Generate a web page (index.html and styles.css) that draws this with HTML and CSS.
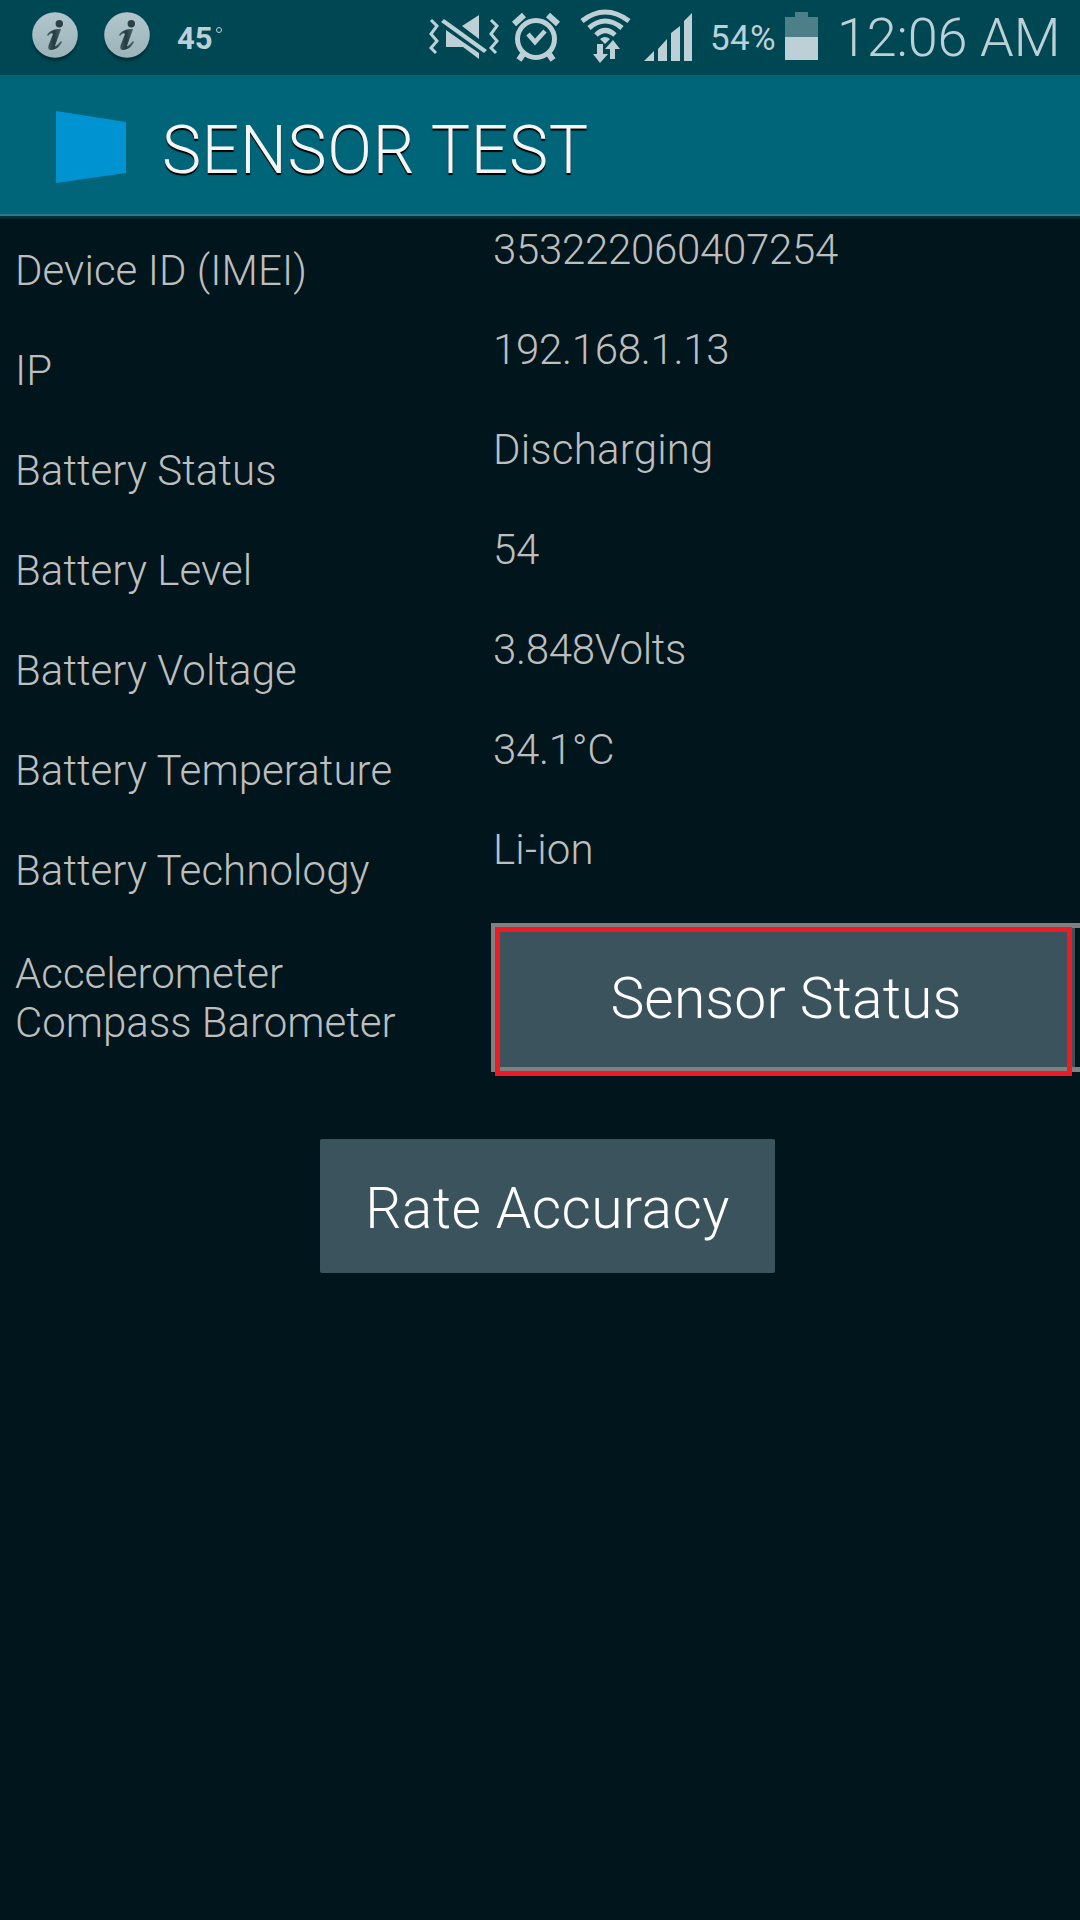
FILE: index.html
```html
<!DOCTYPE html>
<html lang="en">
<head>
<meta charset="utf-8">
<title>Sensor Test</title>
<link rel="stylesheet" href="styles.css">
</head>
<body>
<header class="status-bar">
  <div class="notices">
    <svg class="info" viewBox="0 0 54 60"><use href="#info-badge"/></svg>
    <svg class="info" viewBox="0 0 54 60"><use href="#info-badge"/></svg>
    <span class="weather">45<span class="degree"></span></span>
  </div>
  <svg class="system" viewBox="0 0 270 75" fill="#bdd0d5">
    <path fill="none" stroke="#bdd0d5" stroke-width="3" d="M11 20l6 6-6 8 6 7-6 7 5 5M71 20l6 6-6 8 6 7-6 7 5 5"/>
    <path d="M42 26L59 15V39ZM26 30L43 42L59 53V59L43 47H26Z"/>
    <path d="M24 19L67 50L64 53L21 22Z"/>
    <g fill="none" stroke="#bdd0d5">
      <circle cx="116" cy="39" r="18.5" stroke-width="5"/>
      <path d="M108 34l7 8 10-11" stroke-width="4.5"/>
      <path d="M94 24l10-9M128 15l10 9" stroke-width="6"/>
      <path d="M103 54l-4 6M129 54l4 6" stroke-width="6"/>
      <path d="M162 21Q185 3 209 21M169 28Q185 14 202 28M176 35Q185 26 195 35" stroke-width="5"/>
    </g>
    <path d="M180 39Q185 35 190 39L185 44Z"/>
    <path d="M177 44h6v10h5l-8 9-7-9h4ZM190 59V49h-5l8-9 7 9h-5v10Z"/>
    <path d="M224 61L234 51V61ZM238 61V49L247 39V61ZM251 61V33L260 26V61ZM264 61V21L272 13V61Z"/>
  </svg>
  <span class="percent">54%</span>
  <svg class="battery" viewBox="0 0 33 48"><path fill="#4d7f88" d="M10 0h13v5h10v20H0V5h10Z"/><path fill="#bdd0d5" d="M0 25h33v23H0Z"/></svg>
  <time class="clock">12:06 AM</time>
</header>
<div class="action-bar">
  <svg class="logo" viewBox="0 0 70 72" preserveAspectRatio="none"><path fill="#0093d2" d="M0 0L70 11V62L0 72Z"/></svg>
  <h1>SENSOR TEST</h1>
</div>
<main>
  <dl>
    <dt>Device ID (IMEI)</dt><dd class="numeric">353222060407254</dd>
    <dt>IP</dt><dd class="numeric">192.168.1.13</dd>
    <dt>Battery Status</dt><dd>Discharging</dd>
    <dt>Battery Level</dt><dd class="numeric">54</dd>
    <dt>Battery Voltage</dt><dd class="numeric">3.848Volts</dd>
    <dt>Battery Temperature</dt><dd class="numeric">34.1°C</dd>
    <dt>Battery Technology</dt><dd>Li-ion</dd>
  </dl>
  <div class="sensor-row">
    <p>Accelerometer<br>Compass Barometer</p>
    <div class="frame"><button class="status">Sensor Status</button><span class="highlight"></span></div>
  </div>
  <button class="rate">Rate Accuracy</button>
</main>
<svg width="0" height="0" class="defs">
  <defs>
    <linearGradient id="disc" x2="0" y2="1"><stop stop-color="#b1c7cc"/><stop offset="1" stop-color="#9bb3b9"/></linearGradient>
    <linearGradient id="ink"><stop stop-color="#4b6067"/><stop offset=".45" stop-color="#253b42"/><stop offset="1" stop-color="#51666d"/></linearGradient>
    <filter id="soft"><feGaussianBlur stdDeviation="1.8"/></filter>
    <g id="info-badge">
      <circle cx="27" cy="29" r="22" fill="#002d36" filter="url(#soft)"/>
      <circle cx="27" cy="25" r="22.8" fill="url(#disc)"/>
      <circle cx="31.3" cy="13.8" r="3.7" fill="#2a3f46"/>
      <path fill="url(#ink)" d="M19 25C22 20 27 19 33 19L27 36Q28 37 33 31L34 32C31 38 27 40 22 40Q19 39 21 34L25 24Q23 22 20 26Z"/>
    </g>
  </defs>
</svg>
</body>
</html>
```
FILE: styles.css
```css
* { box-sizing: border-box; }
body { margin: 0; width: 1080px; height: 1920px; overflow: hidden; background: #00151c; color: #bebebe; font-family: Roboto, "Liberation Sans", sans-serif; font-weight: 300; }
.defs { display: block; }
.status-bar { display: flex; height: 75px; background: #004754; color: #bdd0d5; }
.notices { display: flex; width: 420px; padding: 10px 0 0 28px; gap: 18px; }
.info { width: 54px; height: 60px; flex: none; }
.weather { display: flex; font-size: 31px; font-weight: 700; line-height: 36px; padding-top: 11px; margin-left: 5px; }
.degree { width: 6px; height: 6px; border: 1.5px solid; border-radius: 50%; margin: 6px 0 0 3px; }
.system { width: 270px; height: 75px; overflow: visible; flex: none; }
.percent { width: 95px; padding-left: 20px; font-size: 35px; font-weight: 400; line-height: 78px; letter-spacing: .3px; }
.battery { width: 33px; height: 48px; margin-top: 12px; flex: none; }
.clock { margin-left: 19px; font-size: 54px; line-height: 75px; white-space: nowrap; letter-spacing: -.2px; }
.action-bar { display: flex; height: 144px; padding-left: 56px; background: #006578; border-bottom: 3px solid #002b33; box-shadow: inset 0 -2px #267d85; }
.logo { width: 70px; height: 72px; margin-top: 36px; }
h1 { margin: 0 0 0 36px; padding-top: 37px; font-size: 66px; line-height: 78px; font-weight: 300; color: #f5f5f5; text-shadow: 0 2px 1px #000; letter-spacing: .65px; }
dl { margin: 0; display: grid; grid-template-columns: 491px 1fr; grid-auto-rows: 100px; font-size: 42px; line-height: 49px; height: 704px; letter-spacing: .07px; }
dt { padding: 27px 0 0 15px; }
dd { margin: 0; padding: 6px 0 0 2px; letter-spacing: .2px; }
.numeric { letter-spacing: -.3px; }
.sensor-row { display: grid; grid-template-columns: 491px 1fr; height: 149px; }
.sensor-row p { margin: 0; padding: 26px 0 0 15px; font-size: 42px; line-height: 49px; }
.frame { position: relative; border: solid #808080; border-width: 5px 0 5px 4px; }
button { display: block; border: 0; padding: 0; background: #3b535c; color: #fff; font: 300 57px/67px Roboto, "Liberation Sans", sans-serif; }
.status { width: 580px; height: 139px; padding: 2px 0 0 2px; letter-spacing: .1px; }
.highlight { position: absolute; left: 0; top: -1px; width: 577px; height: 149px; border: 5px solid #ed1c24; }
.rate { width: 455px; height: 134px; margin: 67px 0 0 320px; border-radius: 2px; padding-top: 4px; letter-spacing: .4px; }
```
